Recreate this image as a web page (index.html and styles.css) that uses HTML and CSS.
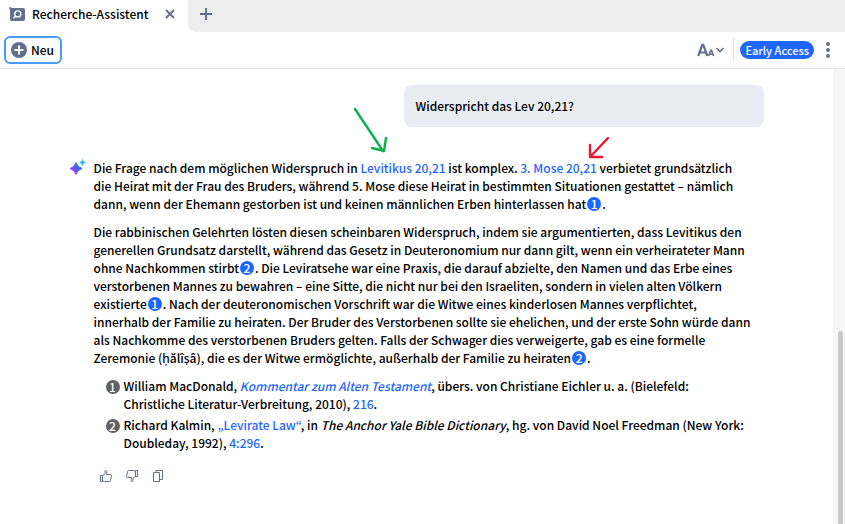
FILE: index.html
```html
<!DOCTYPE html>
<html lang="de">
<head>
<meta charset="utf-8">
<meta name="viewport" content="width=device-width, initial-scale=1">
<title>Recherche-Assistent</title>
<link rel="stylesheet" href="styles.css">
</head>
<body>
<header class="tabs">
  <div class="tab">
    <svg class="tab-icon" width="16" height="15" viewBox="0 0 16 15" aria-hidden="true">
      <path d="M0 0l4 1h10a2 2 0 0 1 2 2v9a2 2 0 0 1-2 2H3a2 2 0 0 1-2-2V4z" fill="#62708e"/>
      <circle cx="8.8" cy="6.9" r="3" fill="none" stroke="#fff" stroke-width="1.4"/>
      <path d="M6.6 9.1L4.4 11.3" stroke="#fff" stroke-width="1.5"/>
    </svg>
    <span class="tab-title">Recherche-Assistent</span>
    <button class="icon-button" type="button" aria-label="Tab schließen">
      <svg width="10" height="10" viewBox="0 0 10 10"><path d="M1 1l8 8M9 1L1 9" stroke="#62708e" stroke-width="1.9"/></svg>
    </button>
  </div>
  <div class="tab-rest">
    <button class="icon-button" type="button" aria-label="Neuer Tab">
      <svg width="12" height="12" viewBox="0 0 12 12"><path d="M6 0v12M0 6h12" stroke="#62708e" stroke-width="1.9"/></svg>
    </button>
  </div>
</header>
<nav class="toolbar">
  <button class="new-button" type="button">
    <svg width="16" height="16" viewBox="0 0 16 16" aria-hidden="true"><circle cx="8" cy="8" r="8" fill="#62708e"/><path d="M8 3.5v9M3.5 8h9" stroke="#fff" stroke-width="2"/></svg>
    Neu
  </button>
  <div class="tools">
    <button class="icon-button" type="button" aria-label="Schriftgröße">
      <svg width="28" height="14" viewBox="0 0 28 14"><g fill="none" stroke="#62708e"><path d="M1.200 13L5.300 1.900h1L10.400 13M2.800 9.500h6" stroke-width="2.200"/><path d="M11.600 13l2.100-5.600h.8l2.100 5.600M12.300 11.200h3.600" stroke-width="1.600"/><path d="M19.500 5L23 8.500 26.500 5" stroke-width="1.700"/></g></svg>
    </button>
    <span class="divider"></span>
    <span class="badge">Early Access</span>
    <button class="icon-button" type="button" aria-label="Menü">
      <svg width="4" height="16" viewBox="0 0 4 16" fill="#62708e"><circle cx="2" cy="2" r="2"/><circle cx="2" cy="8" r="2"/><circle cx="2" cy="14" r="2"/></svg>
    </button>
  </div>
</nav>
<div class="view">
  <main class="page">
    <div class="chat">
      <div class="question">Widerspricht das Lev 20,21?</div>
      <div class="answer">
        <svg class="sparkle" width="16" height="16" viewBox="0 0 16 16" aria-hidden="true">
          <defs><linearGradient id="spark" x1="0" y1="1" x2="1" y2="0"><stop offset=".25" stop-color="#a33cf5"/><stop offset=".6" stop-color="#3a63f4"/><stop offset="1" stop-color="#2f6cff"/></linearGradient></defs>
          <path d="M6 3.500Q7 8 12 9.500 7 11 6 15.500 5 11 0 9.500 5 8 6 3.500z" fill="url(#spark)" stroke="url(#spark)" stroke-linejoin="round"/>
          <path d="M12.500.5Q13 3 15.500 3.500 13 4 12.500 6.500 12 4 9.500 3.500 12 3 12.500.5z" fill="#2cb4f5" stroke="#2cb4f5" stroke-width=".6"/>
        </svg>
        <div class="text">
          <p>Die Frage nach dem möglichen Widerspruch in <a href="#lev">Levitikus 20,21</a> ist komplex. <a href="#mose">3. Mose 20,21</a> verbietet grundsätzlich<br>die Heirat mit der Frau des Bruders, während 5. Mose diese Heirat in bestimmten Situationen gestattet – nämlich<br>dann, wenn der Ehemann gestorben ist und keinen männlichen Erben hinterlassen hat<a class="ref" href="#n1">1</a>.</p>
          <p>Die rabbinischen Gelehrten lösten diesen scheinbaren Widerspruch, indem sie argumentierten, dass Levitikus den<br>generellen Grundsatz darstellt, während das Gesetz in Deuteronomium nur dann gilt, wenn ein verheirateter Mann<br>ohne Nachkommen stirbt<a class="ref" href="#n2">2</a>. Die Leviratsehe war eine Praxis, die darauf abzielte, den Namen und das Erbe eines<br>verstorbenen Mannes zu bewahren – eine Sitte, die nicht nur bei den Israeliten, sondern in vielen alten Völkern<br>existierte<a class="ref" href="#n1">1</a>. Nach der deuteronomischen Vorschrift war die Witwe eines kinderlosen Mannes verpflichtet,<br>innerhalb der Familie zu heiraten. Der Bruder des Verstorbenen sollte sie ehelichen, und der erste Sohn würde dann<br>als Nachkomme des verstorbenen Bruders gelten. Falls der Schwager dies verweigerte, gab es eine formelle<br>Zeremonie (ḥălîṣâ), die es der Witwe ermöglichte, außerhalb der Familie zu heiraten<a class="ref" href="#n2">2</a>.</p>
          <ol class="notes">
            <li id="n1"><span class="ref note">1</span><div>William MacDonald, <a href="#k"><i>Kommentar zum Alten Testament</i></a>, übers. von Christiane Eichler u. a. (Bielefeld:<br>Christliche Literatur-Verbreitung, 2010), <a href="#p216">216</a>.</div></li>
            <li id="n2"><span class="ref note">2</span><div>Richard Kalmin, <a href="#l">„Levirate Law“</a>, in <i>The Anchor Yale Bible Dictionary</i>, hg. von David Noel Freedman (New York:<br>Doubleday, 1992), <a href="#p296">4:296</a>.</div></li>
          </ol>
          <div class="actions">
            <button class="icon-button" type="button" aria-label="Gefällt mir"><svg width="12" height="12" viewBox="0 0 12 12"><path d="M.5 5.500h2v6h-2zM2.500 6L5 3.500V1q0-.5.5-.5h.6q.9.200.9 1.300L6.500 4.500h4q1 0 1 1l-1 5q-.200 1-1.200 1H4.500l-2-1" fill="none" stroke="#62708e"/></svg></button>
            <button class="icon-button" type="button" aria-label="Gefällt mir nicht"><svg width="12" height="12" viewBox="0 0 12 12"><path d="M11.500 6.500h-2v-6h2zM9.500 6L7 8.500V11q0 .5-.5.5h-.6Q5 11.300 5 10.200l.5-2.700h-4q-1 0-1-1l1-5Q1.700.5 2.700.5h4.800l2 1" fill="none" stroke="#62708e"/></svg></button>
            <button class="icon-button" type="button" aria-label="Kopieren"><svg width="12" height="12" viewBox="0 0 12 12"><path d="M1.500 2.500h6v9h-6zM4 2.500v-2h6.500v9h-3" fill="none" stroke="#62708e"/></svg></button>
          </div>
        </div>
      </div>
      <svg class="arrow arrow-green" width="36" height="50" viewBox="0 0 36 50" aria-hidden="true"><path d="M2 2l28 42M19 41l12 3 2-13" fill="none" stroke="#0db14b" stroke-width="2.400" stroke-linecap="round" stroke-linejoin="round"/></svg>
      <svg class="arrow arrow-red" width="22" height="24" viewBox="0 0 22 24" aria-hidden="true"><path d="M20 2L3 20M2 9v12h12" fill="none" stroke="#e8182f" stroke-width="2.400" stroke-linecap="round" stroke-linejoin="round"/></svg>
    </div>
  </main>
  <div class="track"><div class="thumb"></div></div>
</div>
</body>
</html>
```
FILE: styles.css
```css
* { box-sizing: border-box; }
body {
  margin: 0;
  min-height: 100vh;
  display: flex;
  flex-direction: column;
  background: #fff;
  color: #000;
  font: 500 12px/18px "Noto Sans CJK KR", "Noto Sans", sans-serif;
}
a { color: #1e66ff; text-decoration: none; }
button { font: inherit; color: inherit; cursor: pointer; }
svg { display: block; flex: none; }
.icon-button { padding: 0; border: 0; background: none; }

.tabs { display: flex; height: 32px; background: #fff; }
.tab { display: flex; align-items: center; width: 188px; padding: 0 13px 4px 9px; }
.tab-title { flex: 1; padding-left: 7px; white-space: nowrap; }
.tab-rest {
  flex: 1;
  display: flex;
  align-items: center;
  padding: 0 12px 4px;
  background: #ededed;
  border-bottom-left-radius: 8px;
}

.toolbar {
  display: flex;
  align-items: center;
  justify-content: space-between;
  height: 37px;
  padding: 0 15px 0 4px;
  border-bottom: 1px solid #e3e3e3;
}
.new-button {
  display: flex;
  align-items: center;
  gap: 4px;
  height: 28px;
  padding: 0 6px 0 5px;
  border: 2px solid #4a9aff;
  border-radius: 6px;
  background: #fff;
}
.tools { display: flex; align-items: center; }
.divider { width: 1px; height: 24px; margin: 0 6px 0 8px; background: #e0e3e8; }
.badge {
  margin-right: 12px;
  padding: 0 5px;
  border-radius: 9px;
  background: #1e66ff;
  color: #fff;
  font-size: 11px;
}

.view { flex: 1; display: flex; }
.page { flex: 1; padding: 16px 0; }
.chat { position: relative; max-width: 694px; margin: 0 auto; }
.question {
  width: 360px;
  max-width: 100%;
  margin-left: auto;
  padding: 12px;
  border-radius: 8px;
  background: #e9ecf1;
}
.answer { display: flex; gap: 8px; margin-top: 32px; }
.text { flex: 1; white-space: nowrap; }
.text p { margin: 0 0 10px; }
.ref {
  display: inline-block;
  width: 14px;
  height: 14px;
  margin: 0 1px;
  border-radius: 50%;
  background: #1e66ff;
  color: #fff;
  line-height: 14px;
  text-align: center;
}
.notes { margin: 0; padding: 0 0 0 12px; list-style: none; }
.notes li { display: flex; gap: 4px; margin-bottom: 3px; }
.note { flex: none; margin: 3px 0 0; background: #616161; }
.actions { display: flex; gap: 14px; margin: 18px 0 0 6px; }

.track { display: flex; flex-direction: column; width: 12px; padding: 0 2px 0 5px; background: #f7f7f7; }
.track::before { content: ""; flex: 575; }
.thumb { flex: 425; border-radius: 3px 3px 0 0; background: #c9c9c9; }

.arrow { position: absolute; }
.arrow-green { left: 283px; top: 22px; }
.arrow-red { left: 518px; top: 51px; }
```
